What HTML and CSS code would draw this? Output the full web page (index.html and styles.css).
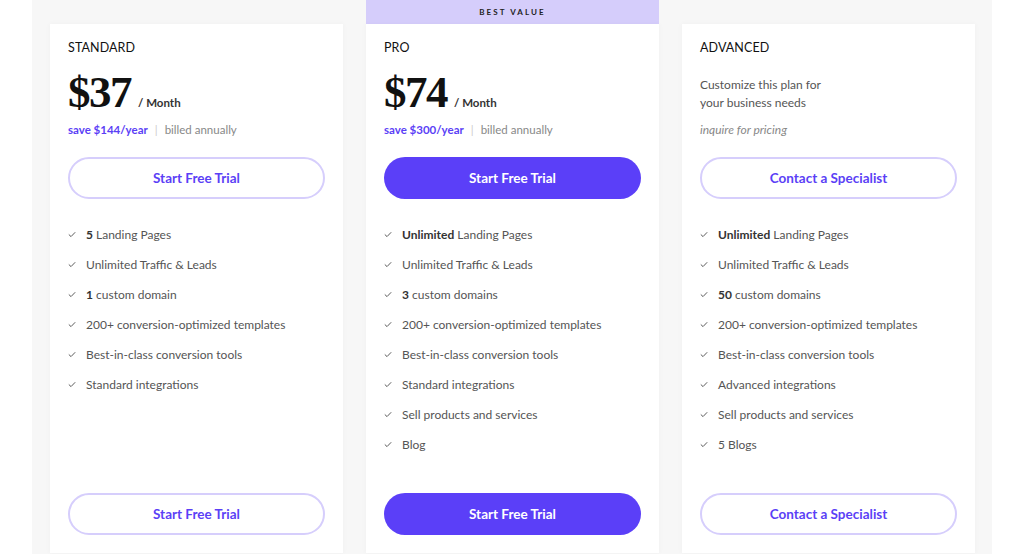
FILE: index.html
```html
<!DOCTYPE html>
<html lang="en">
<head>
<meta charset="utf-8">
<title>Pricing</title>
<link rel="stylesheet" href="styles.css">
</head>
<body>
<div class="page">
  <div class="col">
    <div class="card">
      <h2 class="plan">STANDARD</h2>
      <div class="price-row"><span class="price">$37</span><span class="per">/ Month</span></div>
      <p class="save"><span class="save-amt">save $144/year</span><span class="sep">|</span><span class="billed">billed annually</span></p>
      <a class="btn btn-outline">Start Free Trial</a>
      <ul class="features">
        <li><svg class="check" viewBox="0 0 10 8"><polyline points="1,4 3.8,6.6 9,1.2"/></svg><span><b>5</b> Landing Pages</span></li>
        <li><svg class="check" viewBox="0 0 10 8"><polyline points="1,4 3.8,6.6 9,1.2"/></svg><span>Unlimited Traffic &amp; Leads</span></li>
        <li><svg class="check" viewBox="0 0 10 8"><polyline points="1,4 3.8,6.6 9,1.2"/></svg><span><b>1</b> custom domain</span></li>
        <li><svg class="check" viewBox="0 0 10 8"><polyline points="1,4 3.8,6.6 9,1.2"/></svg><span>200+ conversion-optimized templates</span></li>
        <li><svg class="check" viewBox="0 0 10 8"><polyline points="1,4 3.8,6.6 9,1.2"/></svg><span>Best-in-class conversion tools</span></li>
        <li><svg class="check" viewBox="0 0 10 8"><polyline points="1,4 3.8,6.6 9,1.2"/></svg><span>Standard integrations</span></li>
      </ul>
      <a class="btn btn-outline btn-bottom">Start Free Trial</a>
    </div>
  </div>
  <div class="col col-featured">
    <div class="badge">BEST VALUE</div>
    <div class="card">
      <h2 class="plan">PRO</h2>
      <div class="price-row"><span class="price">$74</span><span class="per">/ Month</span></div>
      <p class="save"><span class="save-amt">save $300/year</span><span class="sep">|</span><span class="billed">billed annually</span></p>
      <a class="btn btn-solid">Start Free Trial</a>
      <ul class="features">
        <li><svg class="check" viewBox="0 0 10 8"><polyline points="1,4 3.8,6.6 9,1.2"/></svg><span><b>Unlimited</b> Landing Pages</span></li>
        <li><svg class="check" viewBox="0 0 10 8"><polyline points="1,4 3.8,6.6 9,1.2"/></svg><span>Unlimited Traffic &amp; Leads</span></li>
        <li><svg class="check" viewBox="0 0 10 8"><polyline points="1,4 3.8,6.6 9,1.2"/></svg><span><b>3</b> custom domains</span></li>
        <li><svg class="check" viewBox="0 0 10 8"><polyline points="1,4 3.8,6.6 9,1.2"/></svg><span>200+ conversion-optimized templates</span></li>
        <li><svg class="check" viewBox="0 0 10 8"><polyline points="1,4 3.8,6.6 9,1.2"/></svg><span>Best-in-class conversion tools</span></li>
        <li><svg class="check" viewBox="0 0 10 8"><polyline points="1,4 3.8,6.6 9,1.2"/></svg><span>Standard integrations</span></li>
        <li><svg class="check" viewBox="0 0 10 8"><polyline points="1,4 3.8,6.6 9,1.2"/></svg><span>Sell products and services</span></li>
        <li><svg class="check" viewBox="0 0 10 8"><polyline points="1,4 3.8,6.6 9,1.2"/></svg><span>Blog</span></li>
      </ul>
      <a class="btn btn-solid btn-bottom">Start Free Trial</a>
    </div>
  </div>
  <div class="col">
    <div class="card">
      <h2 class="plan">ADVANCED</h2>
      <p class="desc">Customize this plan for<br>your business needs</p>
      <p class="inquire">inquire for pricing</p>
      <a class="btn btn-outline">Contact a Specialist</a>
      <ul class="features">
        <li><svg class="check" viewBox="0 0 10 8"><polyline points="1,4 3.8,6.6 9,1.2"/></svg><span><b>Unlimited</b> Landing Pages</span></li>
        <li><svg class="check" viewBox="0 0 10 8"><polyline points="1,4 3.8,6.6 9,1.2"/></svg><span>Unlimited Traffic &amp; Leads</span></li>
        <li><svg class="check" viewBox="0 0 10 8"><polyline points="1,4 3.8,6.6 9,1.2"/></svg><span><b>50</b> custom domains</span></li>
        <li><svg class="check" viewBox="0 0 10 8"><polyline points="1,4 3.8,6.6 9,1.2"/></svg><span>200+ conversion-optimized templates</span></li>
        <li><svg class="check" viewBox="0 0 10 8"><polyline points="1,4 3.8,6.6 9,1.2"/></svg><span>Best-in-class conversion tools</span></li>
        <li><svg class="check" viewBox="0 0 10 8"><polyline points="1,4 3.8,6.6 9,1.2"/></svg><span>Advanced integrations</span></li>
        <li><svg class="check" viewBox="0 0 10 8"><polyline points="1,4 3.8,6.6 9,1.2"/></svg><span>Sell products and services</span></li>
        <li><svg class="check" viewBox="0 0 10 8"><polyline points="1,4 3.8,6.6 9,1.2"/></svg><span>5 Blogs</span></li>
      </ul>
      <a class="btn btn-outline btn-bottom">Contact a Specialist</a>
    </div>
  </div>
</div>
</body>
</html>
```

FILE: styles.css
```css
* { box-sizing: border-box; }
html, body { margin: 0; padding: 0; background: #ffffff; }
body {
  font-family: Lato, "Open Sans", Arial, sans-serif;
  color: #333;
  -webkit-font-smoothing: antialiased;
}
.page {
  margin: 0 32px;
  height: 554px;
  background: #f7f7f7;
  padding: 0 17px 0 18px;
  display: grid;
  grid-template-columns: 293px 293px 293px;
  column-gap: 23px;
  overflow: hidden;
}
.col {
  display: flex;
  flex-direction: column;
  padding-top: 24px;
}
.col-featured { padding-top: 0; }
.badge {
  height: 24px;
  background: #d5cdfb;
  color: #222;
  font-size: 8px;
  font-weight: 700;
  letter-spacing: 2.1px;
  display: flex;
  align-items: center;
  justify-content: center;
}
.card {
  background: #fff;
  height: 529px;
  padding: 16px 18px 18px;
  display: flex;
  flex-direction: column;
  box-shadow: 0 0 6px rgba(0, 0, 0, 0.035);
}
.plan {
  margin: 0;
  font-size: 12.5px;
  line-height: 16px;
  font-weight: 400;
  color: #111;
  letter-spacing: 0.1px;
}
.price-row {
  display: flex;
  align-items: baseline;
  margin-top: 14px;
  height: 44px;
}
.price {
  font-family: "Liberation Serif", "Times New Roman", serif;
  font-weight: 700;
  font-size: 45px;
  line-height: 44px;
  letter-spacing: -1.5px;
  color: #111;
}
.per {
  margin-left: 7px;
  font-size: 11.5px;
  color: #333;
  font-weight: 700;
}
.save {
  margin: 8px 0 0;
  font-size: 11.5px;
  line-height: 16px;
  display: flex;
  align-items: center;
}
.save-amt { color: #5b3ff6; font-weight: 700; }
.sep { color: #ccc; margin: 0 7px; }
.billed { color: #888; }
.desc {
  margin: 20px 0 0;
  font-size: 12px;
  line-height: 18px;
  color: #555;
}
.inquire {
  margin: 10px 0 0;
  font-size: 12px;
  line-height: 16px;
  color: #888;
  font-style: italic;
}
.btn {
  display: flex;
  align-items: center;
  justify-content: center;
  height: 42px;
  margin-top: 19px;
  border-radius: 21px;
  font-size: 13.5px;
  font-weight: 700;
  cursor: pointer;
  padding-bottom: 1px;
}
.btn-outline {
  border: 2px solid #d6cefc;
  color: #5b3ff6;
  background: #fff;
}
.btn-solid {
  background: #5b3ff8;
  color: #fff;
}
.btn-bottom { margin-top: auto; }
.features {
  list-style: none;
  margin: 20px 0 0;
  padding: 0;
}
.features li {
  display: flex;
  align-items: center;
  height: 30px;
  font-size: 12px;
  color: #555;
}
.features b { color: #333; font-weight: 700; }
.check {
  width: 8px;
  height: 7px;
  margin-right: 10px;
  fill: none;
  stroke: #555;
  stroke-width: 1.2;
}
```
